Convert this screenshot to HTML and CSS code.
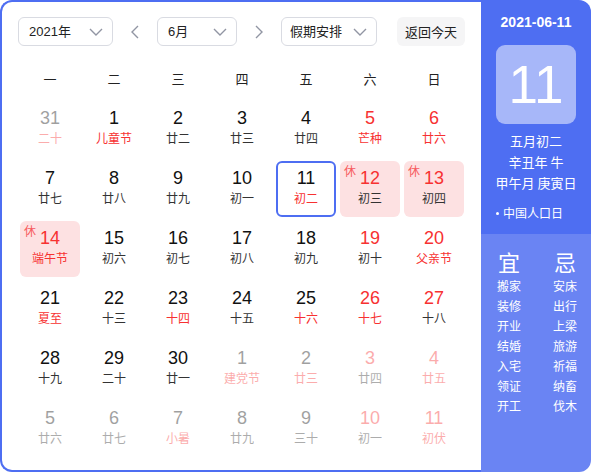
FILE: index.html
```html
<!DOCTYPE html>
<html lang="zh">
<head>
<meta charset="utf-8">
<link rel="stylesheet" href="styles.css">
</head>
<body>
<div class="cal">
  <div class="main">
    <div class="toolbar">
      <div class="select sel-year"><span>2021年</span><svg class="chev" viewBox="0 0 14 8"><polyline points="1,1 7,7 13,1"/></svg></div>
      <div class="arrow"><svg viewBox="0 0 10 14"><polyline points="8,1 2,7 8,13"/></svg></div>
      <div class="select sel-month"><span>6月</span><svg class="chev" viewBox="0 0 14 8"><polyline points="1,1 7,7 13,1"/></svg></div>
      <div class="arrow"><svg viewBox="0 0 10 14"><polyline points="2,1 8,7 2,13"/></svg></div>
      <div class="select sel-hol"><span>假期安排</span><svg class="chev" viewBox="0 0 14 8"><polyline points="1,1 7,7 13,1"/></svg></div>
      <div class="today">返回今天</div>
    </div>
    <div class="week">
      <span>一</span><span>二</span><span>三</span><span>四</span><span>五</span><span>六</span><span>日</span>
    </div>
    <div class="grid">
      <div class="cell out"><b>31</b><i class="red">二十</i></div>
      <div class="cell"><b>1</b><i class="red">儿童节</i></div>
      <div class="cell"><b>2</b><i>廿二</i></div>
      <div class="cell"><b>3</b><i>廿三</i></div>
      <div class="cell"><b>4</b><i>廿四</i></div>
      <div class="cell"><b class="red">5</b><i class="red">芒种</i></div>
      <div class="cell"><b class="red">6</b><i class="red">廿六</i></div>

      <div class="cell"><b>7</b><i>廿七</i></div>
      <div class="cell"><b>8</b><i>廿八</i></div>
      <div class="cell"><b>9</b><i>廿九</i></div>
      <div class="cell"><b>10</b><i>初一</i></div>
      <div class="cell sel"><b>11</b><i class="red">初二</i></div>
      <div class="cell rest"><em>休</em><b class="red">12</b><i>初三</i></div>
      <div class="cell rest"><em>休</em><b class="red">13</b><i>初四</i></div>

      <div class="cell rest"><em>休</em><b class="red">14</b><i class="red">端午节</i></div>
      <div class="cell"><b>15</b><i>初六</i></div>
      <div class="cell"><b>16</b><i>初七</i></div>
      <div class="cell"><b>17</b><i>初八</i></div>
      <div class="cell"><b>18</b><i>初九</i></div>
      <div class="cell"><b class="red">19</b><i>初十</i></div>
      <div class="cell"><b class="red">20</b><i class="red">父亲节</i></div>

      <div class="cell"><b>21</b><i class="red">夏至</i></div>
      <div class="cell"><b>22</b><i>十三</i></div>
      <div class="cell"><b>23</b><i class="red">十四</i></div>
      <div class="cell"><b>24</b><i>十五</i></div>
      <div class="cell"><b>25</b><i class="red">十六</i></div>
      <div class="cell"><b class="red">26</b><i class="red">十七</i></div>
      <div class="cell"><b class="red">27</b><i>十八</i></div>

      <div class="cell"><b>28</b><i>十九</i></div>
      <div class="cell"><b>29</b><i>二十</i></div>
      <div class="cell"><b>30</b><i>廿一</i></div>
      <div class="cell out"><b>1</b><i class="red">建党节</i></div>
      <div class="cell out"><b>2</b><i class="red">廿三</i></div>
      <div class="cell out"><b class="red">3</b><i>廿四</i></div>
      <div class="cell out"><b class="red">4</b><i class="red">廿五</i></div>

      <div class="cell out"><b>5</b><i>廿六</i></div>
      <div class="cell out"><b>6</b><i>廿七</i></div>
      <div class="cell out"><b>7</b><i class="red">小暑</i></div>
      <div class="cell out"><b>8</b><i>廿九</i></div>
      <div class="cell out"><b>9</b><i>三十</i></div>
      <div class="cell out"><b class="red">10</b><i>初一</i></div>
      <div class="cell out"><b class="red">11</b><i class="red">初伏</i></div>
    </div>
  </div>
  <div class="side">
    <div class="side-top">
      <div class="date">2021-06-11</div>
      <div class="bigday">11</div>
      <div class="lunar">
        <div>五月初二</div>
        <div>辛丑年 牛</div>
        <div>甲午月 庚寅日</div>
      </div>
      <div class="fest"><span class="dot"></span>中国人口日</div>
    </div>
    <div class="side-bot">
      <div class="yj">
        <div class="col">
          <div class="head">宜</div>
          <div>搬家</div><div>装修</div><div>开业</div><div>结婚</div><div>入宅</div><div>领证</div><div>开工</div>
        </div>
        <div class="col">
          <div class="head">忌</div>
          <div>安床</div><div>出行</div><div>上梁</div><div>旅游</div><div>祈福</div><div>纳畜</div><div>伐木</div>
        </div>
      </div>
    </div>
  </div>
</div>
</body>
</html>
```

FILE: styles.css
```css
* { box-sizing: border-box; }
html, body { margin: 0; padding: 0; background: #fff; }
body {
  font-family: "Liberation Sans", Arial, "Noto Sans CJK SC", sans-serif;
  color: #222;
}
.cal {
  display: flex;
  width: 591px;
  height: 472px;
}
.main {
  width: 481px;
  height: 472px;
  border: 2px solid #4e6ef2;
  border-right: none;
  border-radius: 12px 0 0 12px;
  padding: 15px 0 0 16px;
}
.toolbar {
  display: flex;
  align-items: center;
  height: 29px;
}
.select {
  height: 29px;
  border: 1px solid #d9dbe2;
  border-radius: 6px;
  display: flex;
  align-items: center;
  justify-content: space-between;
  padding: 0 9px 0 10px;
  font-size: 13px;
  color: #222;
  font-family: "Liberation Sans", Arial, "Noto Sans CJK SC", sans-serif;
}
.select span { line-height: 1; }
.sel-year { width: 95px; }
.sel-month { width: 80px; }
.sel-hol { width: 96px; padding-left: 8px; }
.chev {
  width: 14px;
  height: 8px;
  fill: none;
  stroke: #9195a3;
  stroke-width: 1.4;
}
.arrow {
  width: 44px;
  height: 29px;
  display: flex;
  align-items: center;
  justify-content: center;
}
.arrow svg {
  width: 10px;
  height: 14px;
  fill: none;
  stroke: #9195a3;
  stroke-width: 1.4;
}
.today {
  margin-left: 20px;
  width: 68px;
  height: 29px;
  border-radius: 6px;
  background: #f5f5f6;
  display: flex;
  align-items: center;
  justify-content: center;
  font-size: 13px;
  color: #222;
  font-family: "Noto Sans CJK SC", sans-serif;
}
.week {
  display: grid;
  grid-template-columns: repeat(7, 60px);
  column-gap: 4px;
  margin: 23px 0 0 2px;
  height: 20px;
  line-height: 20px;
  font-size: 13px;
  font-family: "Noto Sans CJK SC", sans-serif;
  color: #222;
  text-align: center;
}
.grid {
  display: grid;
  grid-template-columns: repeat(7, 60px);
  grid-auto-rows: 56px;
  gap: 4px;
  margin: 12px 0 0 2px;
}
.cell {
  position: relative;
  border: 2px solid transparent;
  border-radius: 6px;
  display: flex;
  flex-direction: column;
  align-items: center;
  padding-top: 5px;
  text-align: center;
}
.cell b {
  font-weight: normal;
  font-size: 18px;
  line-height: 20px;
  color: #111;
  font-family: "Liberation Sans", Arial, sans-serif;
}
.cell i {
  font-style: normal;
  font-size: 12px;
  line-height: 20px;
  color: #333;
  font-family: "Noto Sans CJK SC", sans-serif;
}
.cell .red { color: #f73131; }
.cell.out { opacity: 0.4; }
.cell.sel { border-color: #4e6ef2; }
.cell.rest { background: #fde1e2; }
.cell em {
  position: absolute;
  top: 0px;
  left: 2px;
  font-style: normal;
  font-size: 12px;
  line-height: 16px;
  color: #f75a5d;
  font-family: "Noto Sans CJK SC", sans-serif;
}
.side {
  width: 110px;
  height: 472px;
  border-radius: 0 12px 12px 0;
  overflow: hidden;
  display: flex;
  flex-direction: column;
  color: #fff;
}
.side-top {
  background: #4e6ef2;
  height: 234px;
  display: flex;
  flex-direction: column;
  align-items: center;
  padding-top: 13px;
}
.date {
  font-size: 14px;
  font-weight: bold;
  line-height: 18px;
}
.bigday {
  margin-top: 14px;
  width: 80px;
  height: 79px;
  border-radius: 9px;
  background: rgba(255,255,255,0.5);
  font-size: 53px;
  line-height: 79px;
  text-align: center;
  font-family: "Liberation Sans", Arial, sans-serif;
}
.lunar {
  margin-top: 6px;
  font-size: 13px;
  line-height: 21px;
  text-align: center;
  font-family: "Noto Sans CJK SC", sans-serif;
}
.fest {
  align-self: flex-start;
  display: flex;
  align-items: center;
  margin: 10px 0 0 15px;
  font-size: 12px;
  line-height: 20px;
  font-family: "Noto Sans CJK SC", sans-serif;
}
.dot {
  width: 3px;
  height: 3px;
  border-radius: 50%;
  background: #fff;
  margin-right: 4px;
}
.side-bot {
  flex: 1;
  background: #6a84f3;
  padding-top: 13px;
}
.yj {
  display: grid;
  grid-template-columns: 56px 56px;
  font-family: "Noto Sans CJK SC", sans-serif;
}
.col {
  text-align: center;
  font-size: 12px;
  line-height: 20px;
}
.col .head {
  font-size: 22px;
  line-height: 28px;
  margin-bottom: 1px;
}
```
